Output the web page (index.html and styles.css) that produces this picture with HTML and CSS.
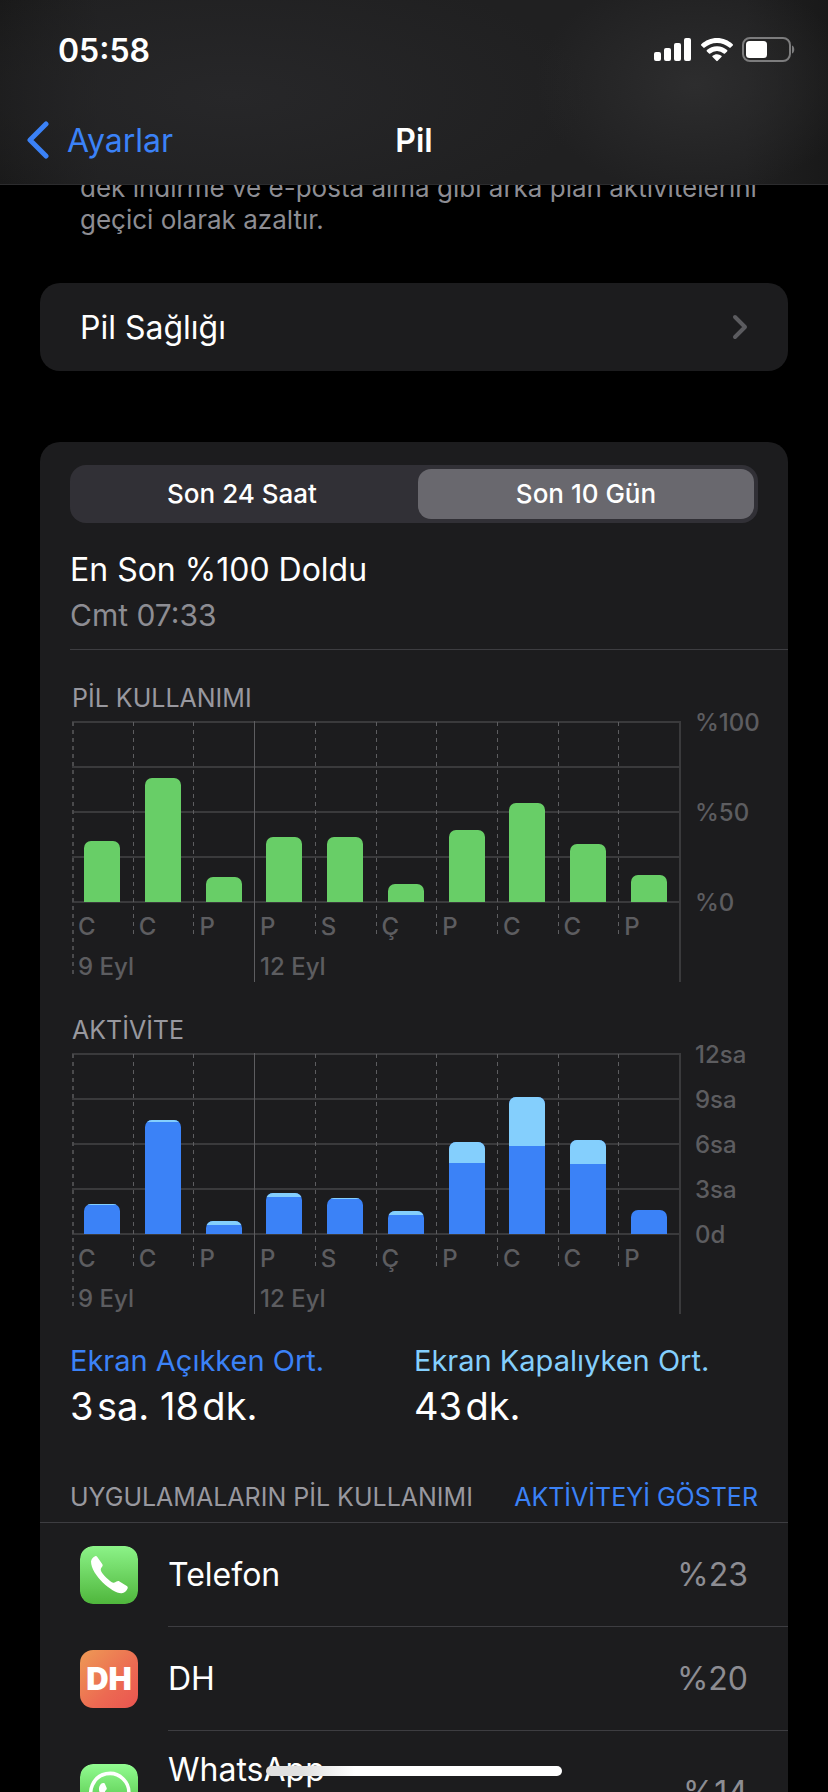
FILE: index.html
```html
<!DOCTYPE html>
<html lang="tr">
<head>
<meta charset="utf-8">
<meta name="viewport" content="width=device-width, initial-scale=1">
<title>Pil</title>
<link rel="stylesheet" href="styles.css">
</head>
<body>
<div class="screen">
  <header class="top">
    <div class="status">
      <span class="time">05:58</span>
      <span class="status-icons">
        <svg width="38" height="24" viewBox="0 0 38 24" fill="#fff" aria-hidden="true"><rect x="0" y="14" width="7" height="9" rx="2"/><rect x="10" y="10" width="7" height="13" rx="2"/><rect x="20" y="5" width="7" height="18" rx="2"/><rect x="30" y="0" width="7" height="23" rx="2"/></svg>
        <svg width="32" height="24" viewBox="0 0 32 24" fill="#fff" aria-hidden="true"><path d="M16 0C9.900 0 4.300 2.400 0.300 6.200a1 1 0 0 0 0 1.400l2 2a1 1 0 0 0 1.400 0A18 18 0 0 1 16 4.900a18 18 0 0 1 12.300 4.700 1 1 0 0 0 1.400 0l2-2a1 1 0 0 0 0-1.400C27.700 2.400 22.100 0 16 0z"/><path d="M16 8.200c-3.900 0-7.400 1.400-10.100 3.800a1 1 0 0 0 0 1.400l2.100 2.100a1 1 0 0 0 1.300 0 10 10 0 0 1 13.400 0 1 1 0 0 0 1.300 0l2.100-2.100a1 1 0 0 0 0-1.400A15 15 0 0 0 16 8.200z"/><path d="M16 16.200c-1.700 0-3.200.600-4.400 1.500a.9.900 0 0 0 0 1.400l3.700 3.700a1 1 0 0 0 1.400 0l3.700-3.700a.9.900 0 0 0 0-1.400A7 7 0 0 0 16 16.200z"/></svg>
        <svg width="54" height="26" viewBox="0 0 54 26" aria-hidden="true"><rect x="1" y="1" width="47" height="23" rx="7" fill="none" stroke="#7c7c7d" stroke-width="2"/><rect x="4" y="4" width="21" height="17" rx="3.500" fill="#fff"/><path d="M50 8.500c3 1 3 7 0 8z" fill="#7c7c7d"/></svg>
      </span>
    </div>
    <nav class="nav">
      <a class="back" href="#">
        <svg width="24" height="38" viewBox="0 0 24 38" fill="none" stroke="#3b82f7" stroke-width="5" stroke-linecap="round" stroke-linejoin="round" aria-hidden="true"><path d="M20 3L4 19l16 16"/></svg>
        Ayarlar</a>
      <h1>Pil</h1>
    </nav>
  </header>

  <main>
    <p class="note">dek indirme ve e-posta alma gibi arka plan aktivitelerini<br>geçici olarak azaltır.</p>

    <a class="card link-row" href="#">
      <span>Pil Sağlığı</span>
      <svg width="16" height="26" viewBox="0 0 16 26" fill="none" stroke="#5b5b5f" stroke-width="4" stroke-linecap="round" stroke-linejoin="round" aria-hidden="true"><path d="M3 3l10 10L3 23"/></svg>
    </a>

    <section class="card usage">
      <div class="segments">
        <label class="segment"><input type="radio" name="range">Son 24 Saat</label>
        <label class="segment"><input type="radio" name="range" checked>Son 10 Gün</label>
      </div>

      <div class="charged">
        <h2>En Son %100 Doldu</h2>
        <p>Cmt 07:33</p>
      </div>

      <h3>PİL KULLANIMI</h3>
      <div class="chart">
        <div class="plot">
          <div class="col first"><div class="slot"><i class="bar level" style="height:34%"></i></div><span>C</span><span class="date">9 Eyl</span></div>
          <div class="col"><div class="slot"><i class="bar level" style="height:69%"></i></div><span>C</span></div>
          <div class="col"><div class="slot"><i class="bar level" style="height:14%"></i></div><span>P</span></div>
          <div class="col week"><div class="slot"><i class="bar level" style="height:36%"></i></div><span>P</span><span class="date">12 Eyl</span></div>
          <div class="col"><div class="slot"><i class="bar level" style="height:36%"></i></div><span>S</span></div>
          <div class="col"><div class="slot"><i class="bar level" style="height:10%"></i></div><span>Ç</span></div>
          <div class="col"><div class="slot"><i class="bar level" style="height:40%"></i></div><span>P</span></div>
          <div class="col"><div class="slot"><i class="bar level" style="height:55%"></i></div><span>C</span></div>
          <div class="col"><div class="slot"><i class="bar level" style="height:32%"></i></div><span>C</span></div>
          <div class="col"><div class="slot"><i class="bar level" style="height:15%"></i></div><span>P</span></div>
        </div>
        <div class="axis"><span>%100</span><span>%50</span><span>%0</span></div>
      </div>

      <h3>AKTİVİTE</h3>
      <div class="chart">
        <div class="plot">
          <div class="col first"><div class="slot"><i class="bar screen-on" style="height:30px"><b style="height:1px"></b></i></div><span>C</span><span class="date">9 Eyl</span></div>
          <div class="col"><div class="slot"><i class="bar screen-on" style="height:114px"><b style="height:2px"></b></i></div><span>C</span></div>
          <div class="col"><div class="slot"><i class="bar screen-on" style="height:13px"><b style="height:4px"></b></i></div><span>P</span></div>
          <div class="col week"><div class="slot"><i class="bar screen-on" style="height:41px"><b style="height:4px"></b></i></div><span>P</span><span class="date">12 Eyl</span></div>
          <div class="col"><div class="slot"><i class="bar screen-on" style="height:36px"><b style="height:1px"></b></i></div><span>S</span></div>
          <div class="col"><div class="slot"><i class="bar screen-on" style="height:23px"><b style="height:4px"></b></i></div><span>Ç</span></div>
          <div class="col"><div class="slot"><i class="bar screen-on" style="height:92px"><b style="height:21px"></b></i></div><span>P</span></div>
          <div class="col"><div class="slot"><i class="bar screen-on" style="height:137px"><b style="height:49px"></b></i></div><span>C</span></div>
          <div class="col"><div class="slot"><i class="bar screen-on" style="height:94px"><b style="height:24px"></b></i></div><span>C</span></div>
          <div class="col"><div class="slot"><i class="bar screen-on" style="height:24px"></i></div><span>P</span></div>
        </div>
        <div class="axis"><span>12sa</span><span>9sa</span><span>6sa</span><span>3sa</span><span>0d</span></div>
      </div>

      <dl class="averages">
        <div><dt class="on">Ekran Açıkken Ort.</dt><dd>3&#8202;sa. 18&#8202;dk.</dd></div>
        <div><dt class="off">Ekran Kapalıyken Ort.</dt><dd>43&#8202;dk.</dd></div>
      </dl>

      <div class="list-head">
        <h4>UYGULAMALARIN PİL KULLANIMI</h4>
        <button type="button">AKTİVİTEYİ GÖSTER</button>
      </div>
      <ul class="apps">
        <li>
          <svg class="icon" viewBox="0 0 58 58" aria-hidden="true"><defs><linearGradient id="phone" x2="0" y2="1"><stop stop-color="#8cf388"/><stop offset="1" stop-color="#4fb63c"/></linearGradient></defs><rect width="58" height="58" rx="13" fill="url(#phone)"/><path fill="#fff" d="M11 15.500c.3-2.300 2.200-4.500 4.200-5.300.9-.3 1.500 0 2.100.8l4.900 7c.7 1 .6 1.900-.1 2.800-.8 1.100-1.500 2-1.300 3.400.6 3.200 9.300 11.900 12.500 12.500 1.300.2 2.100-.3 3.200-1.100 1-.8 1.900-.9 3-.2l7.300 4.700c.9.600 1.200 1.300.8 2.300-1 2.300-3.200 4.500-6 4.800-8.500.7-30.500-18-30.600-31.700z"/></svg>
          <div class="app"><span>Telefon</span><span class="pct">%23</span></div>
        </li>
        <li>
          <span class="icon dh" aria-hidden="true">DH</span>
          <div class="app"><span>DH</span><span class="pct">%20</span></div>
        </li>
        <li class="tall">
          <svg class="icon" viewBox="0 0 58 58" aria-hidden="true"><defs><linearGradient id="chat" x2="0" y2="1"><stop stop-color="#92fc91"/><stop offset="1" stop-color="#43b534"/></linearGradient></defs><rect width="58" height="58" rx="13" fill="url(#chat)"/><path d="M11 48l2.700-9.500A19 19 0 1 1 20.500 45z" fill="none" stroke="#fff" stroke-width="3.500" stroke-linejoin="round"/><path fill="#fff" d="M19 25c0-3 2-6 4-6 1.500 0 1.800.4 2.200 1.500l1.500 3.600c.5 1.500-2 3-1.700 3.800 1.200 3.100 4 5.600 7.300 7 1.200.4 2-2.600 3.400-2.100l4.300 2.200c1 .6.500 2.500-.3 3.800-5.500 6.400-20.700-4.300-20.700-13.800z"/></svg>
          <div class="app"><span>WhatsApp</span><span class="pct">%14</span></div>
        </li>
      </ul>
    </section>
  </main>
  <div class="home-indicator"></div>
</div>
</body>
</html>
```

FILE: styles.css
```css
* { box-sizing: border-box; margin: 0; padding: 0; }
body {
  background: #000;
  color: #fff;
  font-family: Inter, "Liberation Sans", sans-serif;
  font-size: 32px;
}
a { color: inherit; text-decoration: none; }
h1, h2, h3, h4 { font-weight: 400; }
svg { display: block; flex: none; }

.screen { position: relative; height: 100vh; overflow: hidden; }

.top {
  position: absolute;
  top: 0;
  left: 0;
  right: 0;
  z-index: 1;
  border-bottom: 1px solid #2c2c2e;
  background:
    radial-gradient(ellipse 160px 110px at 84% 46%, #2d2d2e, transparent),
    radial-gradient(ellipse 360px 130px at 28% 52%, #272729, transparent),
    linear-gradient(to right, #191919, #202021 12%, #202021 90%, #191919);
}
.status {
  display: flex;
  justify-content: space-between;
  align-items: center;
  height: 96px;
  padding: 4px 32px 0 58px;
}
.time { font-size: 32px; font-weight: 600; }
.status-icons { display: flex; align-items: center; gap: 9px; }
.nav {
  display: grid;
  grid-template-columns: 1fr auto 1fr;
  align-items: center;
  height: 88px;
  padding: 0 26px;
}
.back { display: flex; align-items: center; gap: 17px; color: #3b82f7; }
.nav h1 { font-size: 32px; font-weight: 600; }

main { padding: 172px 40px 0; }
.note { padding: 0 40px; color: #8d8d93; font-size: 26px; line-height: 32px; white-space: nowrap; }
.card { display: block; border-radius: 20px; background: #1c1c1e; }
.link-row {
  display: flex;
  justify-content: space-between;
  align-items: center;
  height: 88px;
  margin-top: 47px;
  padding: 0 40px;
}

.usage { margin-top: 71px; padding-top: 23px; }
.segments {
  display: grid;
  grid-template-columns: 1fr 1fr;
  gap: 8px;
  margin: 0 30px;
  padding: 4px;
  border-radius: 16px;
  background: #313036;
}
.segment {
  border-radius: 13px;
  font-size: 26px;
  font-weight: 500;
  line-height: 50px;
  text-align: center;
}
.segment:has(input:checked) { background: #69686e; }
.segment input { appearance: none; position: absolute; }

.charged { margin-left: 30px; padding: 27px 0 14px; border-bottom: 1px solid #3d3d41; }
.charged h2 { font-size: 32px; line-height: 40px; }
.charged p { padding-top: 5px; color: #8d8d93; font-size: 30px; line-height: 40px; }

h3 { padding: 32px 32px 7px; color: #98989f; font-size: 25px; line-height: 32px; }

.chart { display: grid; grid-template-columns: 1fr 107px; padding-left: 32px; }
.plot {
  display: grid;
  grid-template-columns: repeat(10, 1fr);
  height: 261px;
  border-right: 2px solid #3a3a3c;
  background: repeating-linear-gradient(to bottom, #3a3a3c 0 2px, transparent 2px 45px) no-repeat 0 0 / 100% 182px;
}
.col {
  min-width: 0;
  color: #5d5d60;
  font-size: 24px;
  font-weight: 500;
  white-space: nowrap;
  background: repeating-linear-gradient(to bottom, #5d5d60 0 4px, transparent 4px 8px) no-repeat 0 1px / 1px 216px;
}
.first { background: repeating-linear-gradient(to bottom, #4a4a4c 0 4px, transparent 4px 8px) no-repeat 0 1px / 2px 256px; }
.week { background: linear-gradient(#5d5d60, #5d5d60) no-repeat 0 0 / 1px 261px; }
.col span { display: block; padding: 5px 0 0 6px; line-height: 40px; }
.col .date { padding-top: 0; }
.slot { display: flex; justify-content: center; align-items: flex-end; height: 180px; margin-top: 1px; }
.bar { display: block; width: 36px; border-radius: 7px 7px 0 0; overflow: hidden; }
.bar b { display: block; background: #84cffd; }
.level { background: #68ce67; }
.screen-on { background: #3b82f7; }
.axis {
  display: flex;
  flex-direction: column;
  justify-content: space-between;
  height: 225px;
  margin-top: -21px;
  padding-left: 14px;
  color: #5d5d60;
  font-size: 24px;
  font-weight: 500;
  line-height: 45px;
}

.averages { display: grid; grid-template-columns: 1fr 1fr; padding: 27px 30px 0; }
.averages dt { font-size: 29px; line-height: 40px; }
.averages dd { font-size: 38px; line-height: 50px; }
.on { color: #3b82f7; }
.off { color: #84cffd; }

.list-head {
  display: flex;
  justify-content: space-between;
  align-items: center;
  padding: 50px 30px 9px;
  border-bottom: 1px solid #3d3d41;
  color: #98989f;
  font-size: 25px;
  line-height: 32px;
}
.list-head h4 { font-size: 25px; }
.list-head button { border: 0; background: none; color: #3b82f7; font: inherit; }
.apps { list-style: none; }
.apps li { display: flex; align-items: center; padding-left: 40px; height: 104px; }
.icon { width: 58px; height: 58px; border-radius: 13px; }
.dh {
  background: linear-gradient(135deg, #ee9a55, #ec6a52 60%, #ea5450);
  font-size: 31px;
  font-weight: 900;
  line-height: 58px;
  text-align: center;
}
.app {
  flex: 1;
  display: flex;
  justify-content: space-between;
  align-items: center;
  height: 100%;
  margin-left: 30px;
  padding-right: 40px;
  border-bottom: 1px solid #3d3d41;
}
.pct { color: #8d8d93; }
.apps .tall { height: 124px; }
.tall .app > :first-child { align-self: flex-start; padding-top: 19px; }

.home-indicator {
  position: absolute;
  bottom: 16px;
  left: 50%;
  width: 296px;
  height: 10px;
  margin-left: -148px;
  border-radius: 5px;
  background: linear-gradient(to right, #e0e0e0 0 12%, #fff 30%);
}
```
